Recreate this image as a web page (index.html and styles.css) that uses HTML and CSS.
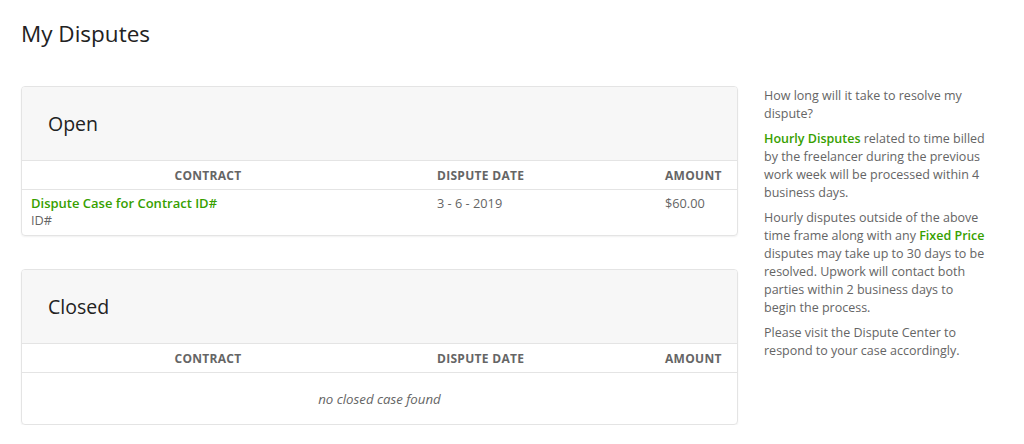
FILE: index.html
```html
<!DOCTYPE html>
<html lang="en">
<head>
    <meta charset="UTF-8">
    <title>My Disputes</title>
    <link rel="stylesheet" href="styles.css">
</head>
<body>
    <h1 class="page-title">My Disputes</h1>

    <div class="page-body">
        <div class="main-column">
            <div class="card">
                <div class="card-header">
                    <h2>Open</h2>
                </div>
                <div class="table-row table-head">
                    <div class="col-contract">Contract</div>
                    <div class="col-date">Dispute Date</div>
                    <div class="col-amount">Amount</div>
                </div>
                <div class="table-row table-data">
                    <div class="col-contract">
                        <a href="#" class="green-link">Dispute Case for Contract ID#</a>
                        <div class="muted">ID#</div>
                    </div>
                    <div class="col-date">3 - 6 - 2019</div>
                    <div class="col-amount">$60.00</div>
                </div>
            </div>

            <div class="card">
                <div class="card-header">
                    <h2>Closed</h2>
                </div>
                <div class="table-row table-head">
                    <div class="col-contract">Contract</div>
                    <div class="col-date">Dispute Date</div>
                    <div class="col-amount">Amount</div>
                </div>
                <div class="empty-row">no closed case found</div>
            </div>
        </div>

        <div class="info-column">
            <p>How long will it take to resolve my dispute?</p>
            <p><span class="green">Hourly Disputes</span> related to time billed by the freelancer during the previous work week will be processed within 4 business days.</p>
            <p>Hourly disputes outside of the above time frame along with any <span class="green">Fixed Price</span> disputes may take up to 30 days to be resolved. Upwork will contact both parties within 2 business days to begin the process.</p>
            <p>Please visit the Dispute Center to respond to your case accordingly.</p>
        </div>
    </div>
</body>
</html>
```

FILE: styles.css
```css
:root {
    --green: #37a000;
    --text-color: #222;
    --text-muted: #656565;
    --border-color: #e4e4e4;
    --header-bg: #f7f7f7;
}

* {
    margin: 0;
    padding: 0;
    box-sizing: border-box;
}

body {
    background: #fff;
    font-family: "Open Sans", "Noto Sans", sans-serif;
    color: var(--text-muted);
    padding: 19px 0 0 21px;
    width: 1024px;
}

.page-title {
    font-size: 22.5px;
    font-weight: 400;
    color: var(--text-color);
    line-height: 30px;
}

.page-body {
    display: flex;
    gap: 26px;
    margin-top: 37px;
}

.main-column {
    width: 717px;
    display: flex;
    flex-direction: column;
    gap: 33px;
}

.card {
    border: 1px solid var(--border-color);
    border-radius: 4px;
    box-shadow: 0 1px 2px rgba(0,0,0,0.06);
    overflow: hidden;
}

.card-header {
    background: var(--header-bg);
    height: 74px;
    display: flex;
    align-items: center;
    padding-left: 26px;
    border-bottom: 1px solid var(--border-color);
}

.card-header h2 {
    font-size: 19.5px;
    font-weight: 400;
    color: var(--text-color);
}

.table-row {
    display: grid;
    grid-template-columns: 354px 280px 1fr;
    padding: 0 16px 0 9px;
    font-size: 12.75px;
}

.table-row .col-date {
    padding-left: 52px;
}

.table-head {
    height: 29px;
    align-items: center;
    border-bottom: 1px solid var(--border-color);
    text-transform: uppercase;
    font-weight: 700;
    font-size: 12px;
    color: #656565;
    letter-spacing: 0.3px;
}

.table-head .col-contract {
    text-align: center;
}

.table-head .col-amount {
    text-align: right;
}

.table-data {
    height: 45px;
    padding-top: 5px;
    line-height: 17px;
}

.green-link {
    color: var(--green);
    font-weight: 600;
    font-size: 13px;
    text-decoration: none;
}

.muted {
    color: var(--text-muted);
}

.empty-row {
    height: 51px;
    display: flex;
    align-items: center;
    justify-content: center;
    font-style: italic;
    font-size: 13.25px;
    color: var(--text-muted);
}

.info-column {
    width: 223px;
    font-size: 12.5px;
    line-height: 18px;
    padding-top: 1px;
}

.info-column p {
    margin-bottom: 7px;
}

.green {
    color: var(--green);
    font-weight: 600;
}
```
